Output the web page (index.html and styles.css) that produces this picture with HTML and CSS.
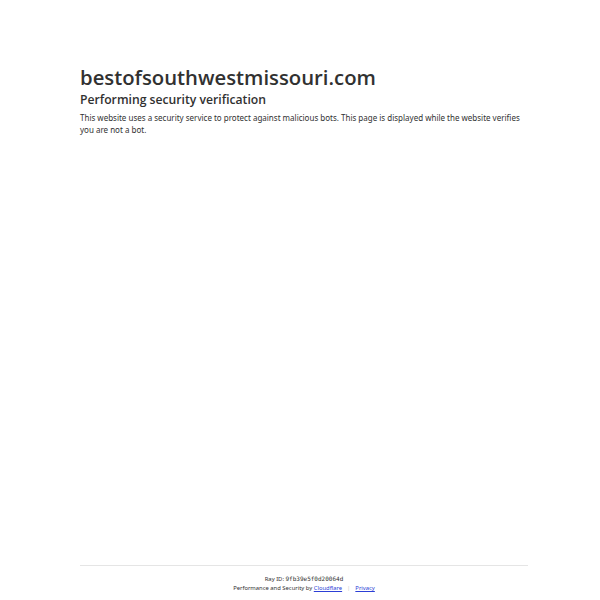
FILE: index.html
```
<!DOCTYPE html>
<html lang="en">
<head>
<meta charset="utf-8">
<title>Just a moment...</title>
<link rel="stylesheet" href="styles.css">
</head>
<body>
<div class="page">
  <main class="main">
    <h1 class="title">bestofsouthwestmissouri.com</h1>
    <h2 class="subtitle">Performing security verification</h2>
    <p class="desc">This website uses a security service to protect against malicious bots. This page is displayed while the website verifies you are not a bot.</p>
  </main>
  <footer class="footer">
    <div class="ray">Ray ID: <code class="code">9fb39e5f0d20064d</code></div>
    <div class="perf">Performance and Security by <a class="link" href="#">Cloudflare</a><span class="sep">|</span><a class="link" href="#">Privacy</a></div>
  </footer>
</div>
</body>
</html>
```
FILE: styles.css
```
html, body {
  margin: 0;
  padding: 0;
  background: #fff;
  color: #313131;
  font-family: "Noto Sans", "Open Sans", sans-serif;
}
.page {
  width: 448px;
  margin-left: 80px;
  height: 600px;
  display: flex;
  flex-direction: column;
}
.main {
  flex: 1;
  padding-top: 63px;
}
.title {
  margin: 0;
  font-family: "Open Sans", "Noto Sans", sans-serif;
  font-size: 20.3px;
  font-weight: 600;
  line-height: 28px;
}
.subtitle {
  margin: 0;
  font-family: "Open Sans", "Noto Sans", sans-serif;
  font-size: 12.2px;
  font-weight: 600;
  line-height: 18px;
}
.desc {
  margin: 3px 0 0;
  font-size: 8px;
  line-height: 12px;
  width: 445px;
}
.footer {
  border-top: 1px solid #e5e5e5;
  padding: 8px 0 7px;
  text-align: center;
  font-size: 5.85px;
  line-height: 9px;
}
.code {
  font-family: "DejaVu Sans Mono", monospace;
  font-size: 6px;
}
.link {
  color: #2c3fd6;
  text-decoration: underline;
}
.sep {
  color: #c9c9c9;
  margin: 0 5px;
}
```
